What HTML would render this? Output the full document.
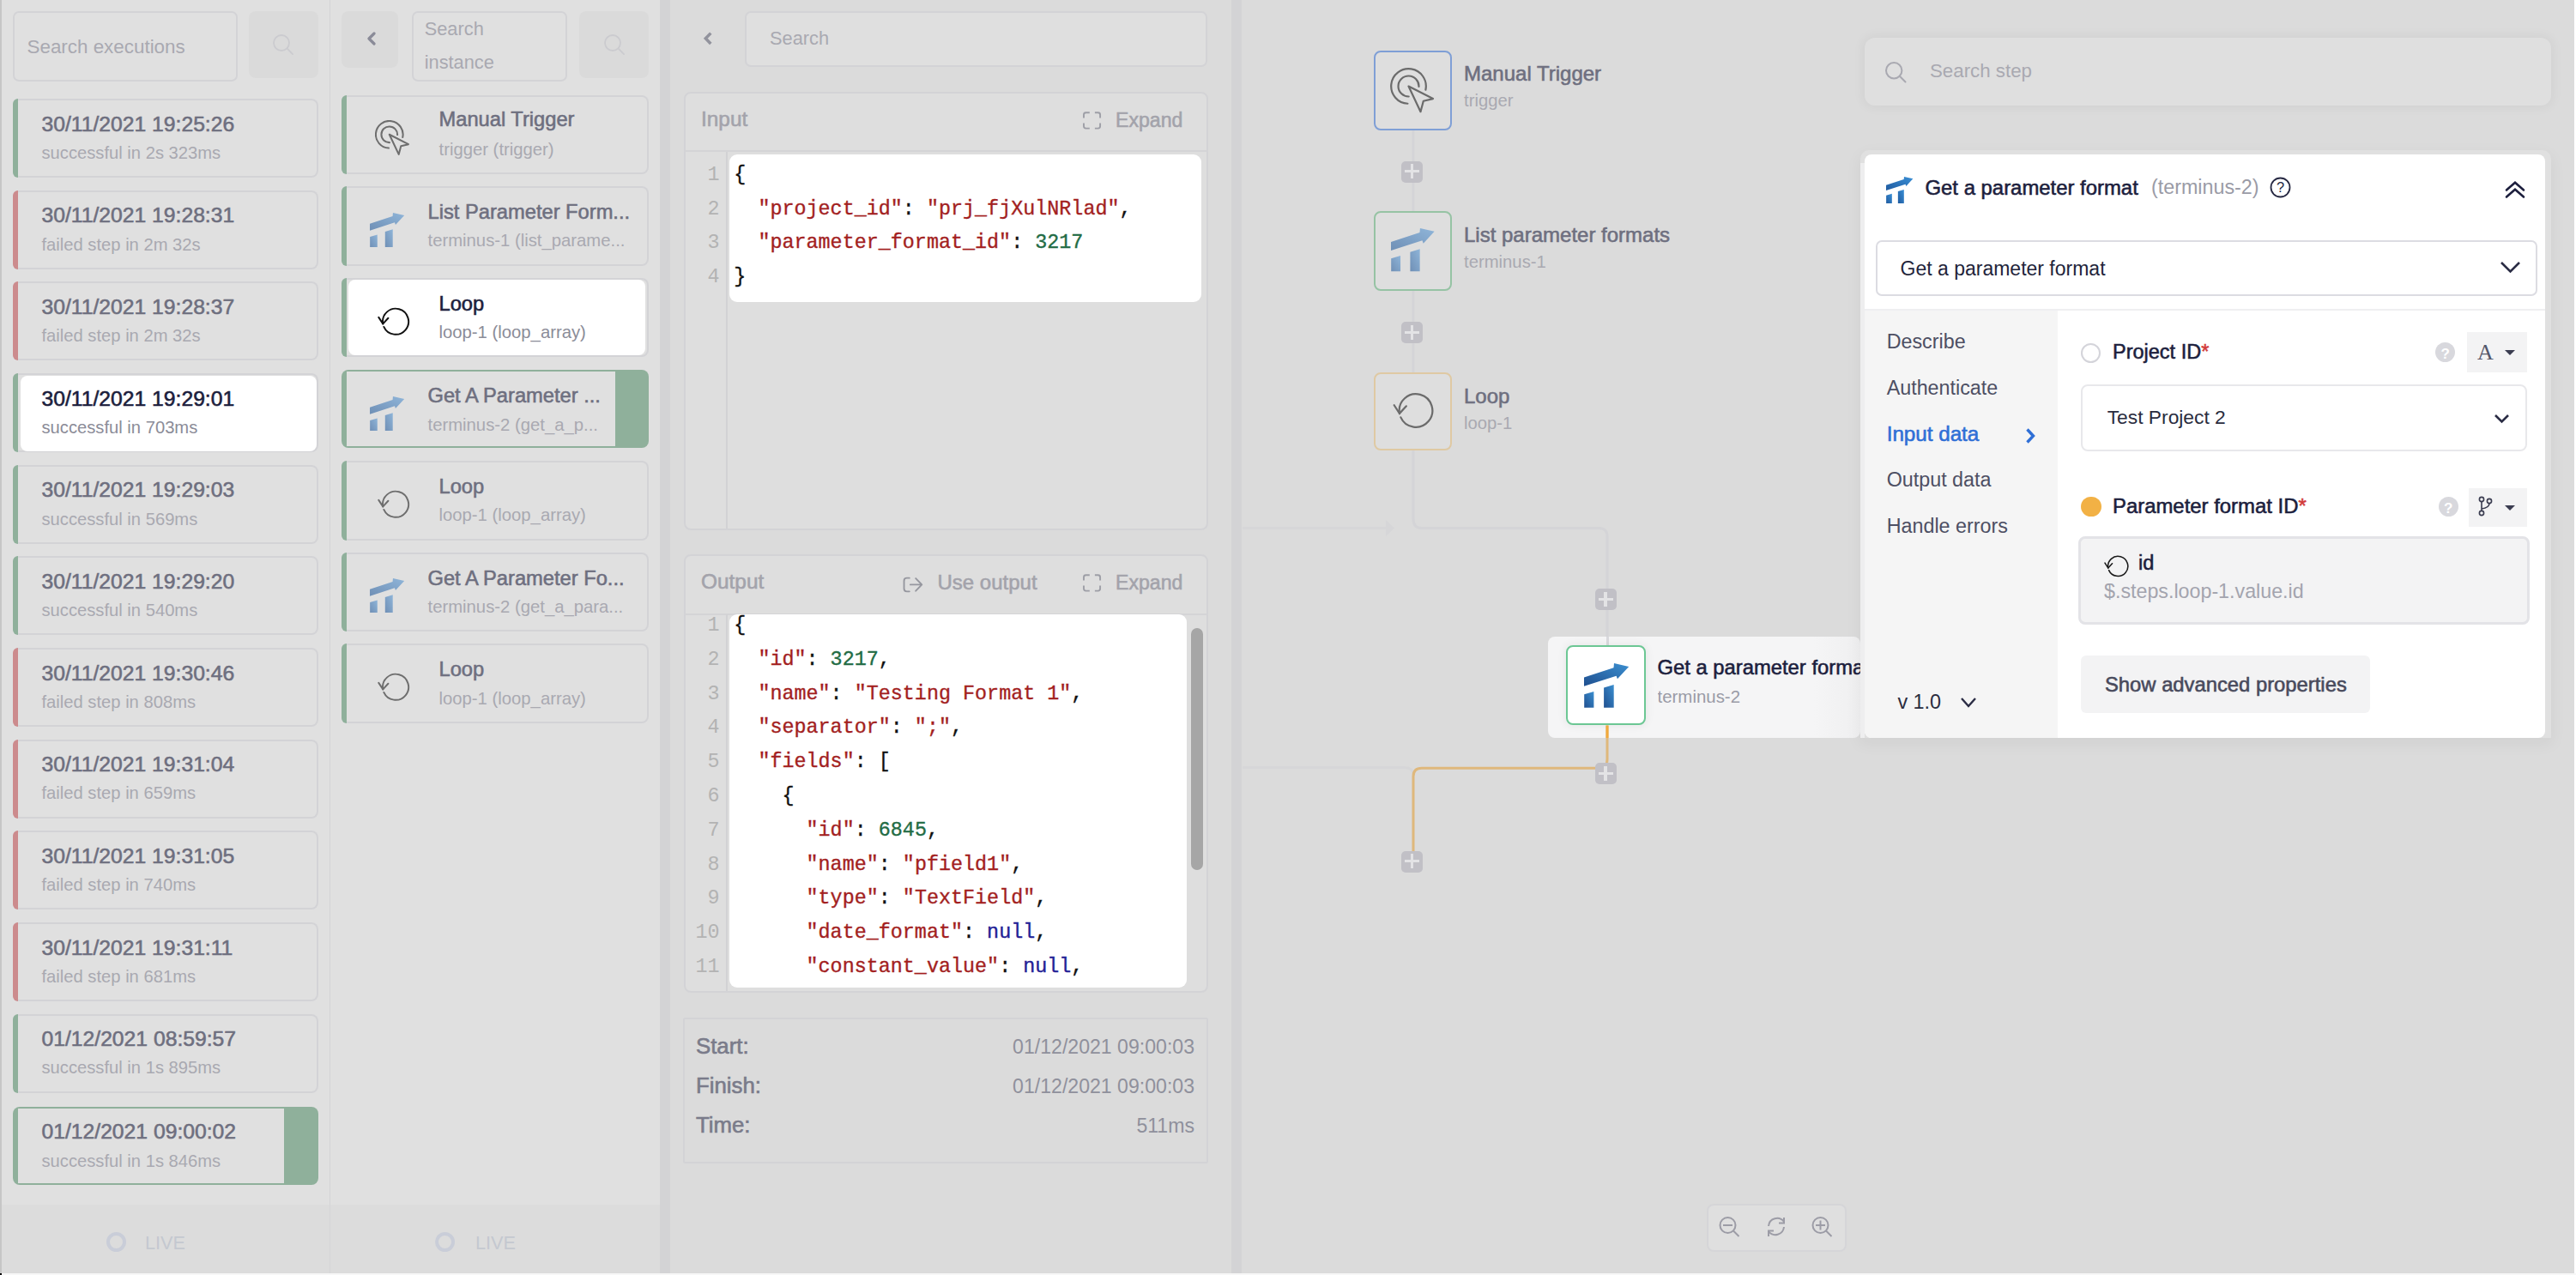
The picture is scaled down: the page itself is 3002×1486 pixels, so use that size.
<!DOCTYPE html><html><head><meta charset="utf-8"><style>html,body{margin:0;padding:0;}body{width:3002px;height:1486px;position:relative;overflow:hidden;background:#ffffff;font-family:"Liberation Sans",sans-serif;}</style></head><body>
<div style="position:absolute;left:0px;top:0px;width:3000px;height:1484px;background:#e0e0e0;"></div>
<div style="position:absolute;left:0px;top:0px;width:2px;height:1484px;background:#c6c6c6;"></div>
<div style="position:absolute;left:0px;top:1484px;width:3002px;height:2px;background:#f7f7f7;"></div>
<div style="position:absolute;left:0px;top:1484px;width:2px;height:2px;background:#000000;"></div>
<div style="position:absolute;left:384px;top:0px;width:1px;height:1484px;background:#d4d4d6;"></div>
<div style="position:absolute;left:769px;top:0px;width:12px;height:1484px;background:#d3d3d5;"></div>
<div style="position:absolute;left:1435px;top:0px;width:12px;height:1484px;background:#d3d3d5;"></div>
<div style="position:absolute;left:1447px;top:0px;width:1553px;height:1484px;background:#dbdbdb;"></div>
<div style="position:absolute;left:781px;top:0px;width:654px;height:1484px;background:#dbdbdb;"></div>
<div style="position:absolute;left:2px;top:1404px;width:382px;height:80px;background:#dcdcdc;"></div>
<div style="position:absolute;left:385px;top:1404px;width:384px;height:80px;background:#dcdcdc;"></div>
<div style="position:absolute;left:15px;top:13px;width:258px;height:78px;border:2px solid #d3d3d6;border-radius:7px;"></div>
<div style="position:absolute;left:31.50px;top:43.54px;font:400 22.4px/22.4px 'Liberation Sans', sans-serif;color:#a9a9b1;white-space:nowrap;">Search executions</div>
<div style="position:absolute;left:290px;top:13px;width:81px;height:78px;background:#dadada;border-radius:8px;"></div>
<svg style="position:absolute;left:317px;top:38.7px;" width="38" height="38" viewBox="0 0 38 38"><circle cx="11" cy="11" r="9" fill="none" stroke="#cbcbcf" stroke-width="1.8"/><line x1="17.48" y1="17.48" x2="24.049999999999997" y2="24.049999999999997" stroke="#cbcbcf" stroke-width="1.8" stroke-linecap="round"/></svg>
<div style="position:absolute;left:15px;top:115.0px;width:353.6px;height:88px;border:2px solid #d3d3d6;border-left:none;border-radius:8px;"></div>
<div style="position:absolute;left:15px;top:115.0px;width:6px;height:92px;background:#8fb09b;border-radius:8px 0 0 8px;"></div>
<div style="position:absolute;left:48.50px;top:132.69px;font:400 24.7px/24.7px 'Liberation Sans', sans-serif;color:#6e6f7f;white-space:nowrap;-webkit-text-stroke:0.59px currentColor;">30/11/2021 19:25:26</div>
<div style="position:absolute;left:48.50px;top:167.90px;font:400 20.2px/20.2px 'Liberation Sans', sans-serif;color:#a9a9b1;white-space:nowrap;">successful in 2s 323ms</div>
<div style="position:absolute;left:15px;top:221.65px;width:353.6px;height:88px;border:2px solid #d3d3d6;border-left:none;border-radius:8px;"></div>
<div style="position:absolute;left:15px;top:221.65px;width:6px;height:92px;background:#cc8b8d;border-radius:8px 0 0 8px;"></div>
<div style="position:absolute;left:48.50px;top:239.34px;font:400 24.7px/24.7px 'Liberation Sans', sans-serif;color:#6e6f7f;white-space:nowrap;-webkit-text-stroke:0.59px currentColor;">30/11/2021 19:28:31</div>
<div style="position:absolute;left:48.50px;top:274.55px;font:400 20.2px/20.2px 'Liberation Sans', sans-serif;color:#a9a9b1;white-space:nowrap;">failed step in 2m 32s</div>
<div style="position:absolute;left:15px;top:328.3px;width:353.6px;height:88px;border:2px solid #d3d3d6;border-left:none;border-radius:8px;"></div>
<div style="position:absolute;left:15px;top:328.3px;width:6px;height:92px;background:#cc8b8d;border-radius:8px 0 0 8px;"></div>
<div style="position:absolute;left:48.50px;top:345.99px;font:400 24.7px/24.7px 'Liberation Sans', sans-serif;color:#6e6f7f;white-space:nowrap;-webkit-text-stroke:0.59px currentColor;">30/11/2021 19:28:37</div>
<div style="position:absolute;left:48.50px;top:381.20px;font:400 20.2px/20.2px 'Liberation Sans', sans-serif;color:#a9a9b1;white-space:nowrap;">failed step in 2m 32s</div>
<div style="position:absolute;left:15px;top:434.95000000000005px;width:353.6px;height:88px;border:2px solid #d3d3d6;border-left:none;border-radius:8px;"></div>
<div style="position:absolute;left:15px;top:434.95000000000005px;width:6px;height:92px;background:#8fb09b;border-radius:8px 0 0 8px;"></div>
<div style="position:absolute;left:23.8px;top:437.55000000000007px;width:345.7px;height:88px;background:#ffffff;border-radius:8px;"></div>
<div style="position:absolute;left:48.50px;top:452.64px;font:400 24.7px/24.7px 'Liberation Sans', sans-serif;color:#1c1e3d;white-space:nowrap;-webkit-text-stroke:0.59px currentColor;">30/11/2021 19:29:01</div>
<div style="position:absolute;left:48.50px;top:487.85px;font:400 20.2px/20.2px 'Liberation Sans', sans-serif;color:#8b8c98;white-space:nowrap;">successful in 703ms</div>
<div style="position:absolute;left:15px;top:541.6px;width:353.6px;height:88px;border:2px solid #d3d3d6;border-left:none;border-radius:8px;"></div>
<div style="position:absolute;left:15px;top:541.6px;width:6px;height:92px;background:#8fb09b;border-radius:8px 0 0 8px;"></div>
<div style="position:absolute;left:48.50px;top:559.29px;font:400 24.7px/24.7px 'Liberation Sans', sans-serif;color:#6e6f7f;white-space:nowrap;-webkit-text-stroke:0.59px currentColor;">30/11/2021 19:29:03</div>
<div style="position:absolute;left:48.50px;top:594.50px;font:400 20.2px/20.2px 'Liberation Sans', sans-serif;color:#a9a9b1;white-space:nowrap;">successful in 569ms</div>
<div style="position:absolute;left:15px;top:648.25px;width:353.6px;height:88px;border:2px solid #d3d3d6;border-left:none;border-radius:8px;"></div>
<div style="position:absolute;left:15px;top:648.25px;width:6px;height:92px;background:#8fb09b;border-radius:8px 0 0 8px;"></div>
<div style="position:absolute;left:48.50px;top:665.94px;font:400 24.7px/24.7px 'Liberation Sans', sans-serif;color:#6e6f7f;white-space:nowrap;-webkit-text-stroke:0.59px currentColor;">30/11/2021 19:29:20</div>
<div style="position:absolute;left:48.50px;top:701.15px;font:400 20.2px/20.2px 'Liberation Sans', sans-serif;color:#a9a9b1;white-space:nowrap;">successful in 540ms</div>
<div style="position:absolute;left:15px;top:754.9000000000001px;width:353.6px;height:88px;border:2px solid #d3d3d6;border-left:none;border-radius:8px;"></div>
<div style="position:absolute;left:15px;top:754.9000000000001px;width:6px;height:92px;background:#cc8b8d;border-radius:8px 0 0 8px;"></div>
<div style="position:absolute;left:48.50px;top:772.59px;font:400 24.7px/24.7px 'Liberation Sans', sans-serif;color:#6e6f7f;white-space:nowrap;-webkit-text-stroke:0.59px currentColor;">30/11/2021 19:30:46</div>
<div style="position:absolute;left:48.50px;top:807.80px;font:400 20.2px/20.2px 'Liberation Sans', sans-serif;color:#a9a9b1;white-space:nowrap;">failed step in 808ms</div>
<div style="position:absolute;left:15px;top:861.5500000000001px;width:353.6px;height:88px;border:2px solid #d3d3d6;border-left:none;border-radius:8px;"></div>
<div style="position:absolute;left:15px;top:861.5500000000001px;width:6px;height:92px;background:#cc8b8d;border-radius:8px 0 0 8px;"></div>
<div style="position:absolute;left:48.50px;top:879.24px;font:400 24.7px/24.7px 'Liberation Sans', sans-serif;color:#6e6f7f;white-space:nowrap;-webkit-text-stroke:0.59px currentColor;">30/11/2021 19:31:04</div>
<div style="position:absolute;left:48.50px;top:914.45px;font:400 20.2px/20.2px 'Liberation Sans', sans-serif;color:#a9a9b1;white-space:nowrap;">failed step in 659ms</div>
<div style="position:absolute;left:15px;top:968.2px;width:353.6px;height:88px;border:2px solid #d3d3d6;border-left:none;border-radius:8px;"></div>
<div style="position:absolute;left:15px;top:968.2px;width:6px;height:92px;background:#cc8b8d;border-radius:8px 0 0 8px;"></div>
<div style="position:absolute;left:48.50px;top:985.89px;font:400 24.7px/24.7px 'Liberation Sans', sans-serif;color:#6e6f7f;white-space:nowrap;-webkit-text-stroke:0.59px currentColor;">30/11/2021 19:31:05</div>
<div style="position:absolute;left:48.50px;top:1021.10px;font:400 20.2px/20.2px 'Liberation Sans', sans-serif;color:#a9a9b1;white-space:nowrap;">failed step in 740ms</div>
<div style="position:absolute;left:15px;top:1074.85px;width:353.6px;height:88px;border:2px solid #d3d3d6;border-left:none;border-radius:8px;"></div>
<div style="position:absolute;left:15px;top:1074.85px;width:6px;height:92px;background:#cc8b8d;border-radius:8px 0 0 8px;"></div>
<div style="position:absolute;left:48.50px;top:1092.54px;font:400 24.7px/24.7px 'Liberation Sans', sans-serif;color:#6e6f7f;white-space:nowrap;-webkit-text-stroke:0.59px currentColor;">30/11/2021 19:31:11</div>
<div style="position:absolute;left:48.50px;top:1127.75px;font:400 20.2px/20.2px 'Liberation Sans', sans-serif;color:#a9a9b1;white-space:nowrap;">failed step in 681ms</div>
<div style="position:absolute;left:15px;top:1181.5px;width:353.6px;height:88px;border:2px solid #d3d3d6;border-left:none;border-radius:8px;"></div>
<div style="position:absolute;left:15px;top:1181.5px;width:6px;height:92px;background:#8fb09b;border-radius:8px 0 0 8px;"></div>
<div style="position:absolute;left:48.50px;top:1199.19px;font:400 24.7px/24.7px 'Liberation Sans', sans-serif;color:#6e6f7f;white-space:nowrap;-webkit-text-stroke:0.59px currentColor;">01/12/2021 08:59:57</div>
<div style="position:absolute;left:48.50px;top:1234.40px;font:400 20.2px/20.2px 'Liberation Sans', sans-serif;color:#a9a9b1;white-space:nowrap;">successful in 1s 895ms</div>
<div style="position:absolute;left:15px;top:1289.65px;width:355.6px;height:91px;background:#8fb09b;border-radius:8px;"></div>
<div style="position:absolute;left:21px;top:1291.65px;width:310px;height:87px;background:#e0e0e0;"></div>
<div style="position:absolute;left:48.50px;top:1307.34px;font:400 24.7px/24.7px 'Liberation Sans', sans-serif;color:#6e6f7f;white-space:nowrap;-webkit-text-stroke:0.59px currentColor;">01/12/2021 09:00:02</div>
<div style="position:absolute;left:48.50px;top:1342.55px;font:400 20.2px/20.2px 'Liberation Sans', sans-serif;color:#a9a9b1;white-space:nowrap;">successful in 1s 846ms</div>
<div style="position:absolute;left:123.5px;top:1436px;width:15px;height:15px;border:4px solid #c9cdd8;border-radius:50%;"></div>
<div style="position:absolute;left:169.00px;top:1437.63px;font:400 21.7px/21.7px 'Liberation Sans', sans-serif;color:#c4c8d0;white-space:nowrap;">LIVE</div>
<div style="position:absolute;left:398px;top:13px;width:66px;height:66px;background:#dadada;border-radius:8px;"></div>
<svg style="position:absolute;left:426px;top:37px;" width="14" height="16" viewBox="0 0 14 16"><path d="M10,2 L4,8 L10,14" fill="none" stroke="#8a8b98" stroke-width="3.2" stroke-linecap="round" stroke-linejoin="round"/></svg>
<div style="position:absolute;left:480px;top:13px;width:177px;height:78px;border:2px solid #d3d3d6;border-radius:7px;"></div>
<div style="position:absolute;left:494.70px;top:23.15px;font:400 21.8px/21.8px 'Liberation Sans', sans-serif;color:#a9a9b1;white-space:nowrap;">Search</div>
<div style="position:absolute;left:494.70px;top:62.35px;font:400 21.8px/21.8px 'Liberation Sans', sans-serif;color:#a9a9b1;white-space:nowrap;">instance</div>
<div style="position:absolute;left:675px;top:13px;width:81px;height:78px;background:#dadada;border-radius:8px;"></div>
<svg style="position:absolute;left:702.5px;top:38.7px;" width="38" height="38" viewBox="0 0 38 38"><circle cx="11" cy="11" r="9" fill="none" stroke="#cbcbcf" stroke-width="1.8"/><line x1="17.48" y1="17.48" x2="24.049999999999997" y2="24.049999999999997" stroke="#cbcbcf" stroke-width="1.8" stroke-linecap="round"/></svg>
<div style="position:absolute;left:398px;top:110.5px;width:355.8px;height:88.7px;border:2px solid #d3d3d6;border-left:none;border-radius:8px;"></div>
<div style="position:absolute;left:398px;top:110.5px;width:6px;height:92.7px;background:#8fb09b;border-radius:8px 0 0 8px;"></div>
<div style="position:absolute;left:511.50px;top:127.84px;font:400 23.7px/23.7px 'Liberation Sans', sans-serif;color:#6e6f7f;white-space:nowrap;-webkit-text-stroke:0.57px currentColor;">Manual Trigger</div>
<div style="position:absolute;left:511.50px;top:163.62px;font:400 20.3px/20.3px 'Liberation Sans', sans-serif;color:#a9a9b1;white-space:nowrap;">trigger (trigger)</div>
<svg style="position:absolute;left:437px;top:140.1px;" width="44" height="44" viewBox="0 0 44 44"><g transform="scale(0.78)"><path d="M41.36,25.72 A20.3,20.3 0 1 0 20.44,41.77 M33.49,21.92 A12,12 0 1 0 21.71,33.50" fill="none" stroke="#6e6e6e" stroke-width="2.6" stroke-linecap="round"/><path d="M21.50,21.50 L50.00,36.10 L38.80,38.70 L35.50,51.20 Z" fill="none" stroke="#6e6e6e" stroke-width="2.6" stroke-linejoin="round"/></g></svg>
<div style="position:absolute;left:398px;top:217.15px;width:355.8px;height:88.7px;border:2px solid #d3d3d6;border-left:none;border-radius:8px;"></div>
<div style="position:absolute;left:398px;top:217.15px;width:6px;height:92.7px;background:#8fb09b;border-radius:8px 0 0 8px;"></div>
<div style="position:absolute;left:498.50px;top:235.94px;font:400 23.7px/23.7px 'Liberation Sans', sans-serif;color:#6e6f7f;white-space:nowrap;-webkit-text-stroke:0.57px currentColor;">List Parameter Form...</div>
<div style="position:absolute;left:498.50px;top:270.27px;font:400 20.3px/20.3px 'Liberation Sans', sans-serif;color:#a9a9b1;white-space:nowrap;">terminus-1 (list_parame...</div>
<svg style="position:absolute;left:430.7px;top:247.65px;" width="42" height="42" viewBox="0 0 42 42"><defs><linearGradient id="tg1" x1="0" y1="1" x2="1" y2="0"><stop offset="0" stop-color="#6f8fb5"/><stop offset="1" stop-color="#8fb5d9"/></linearGradient></defs><g transform="scale(0.77)" fill="url(#tg1)" opacity="1"><path d="M0,26.8 L0,16.4 L34.5,5.2 L35,0 L52.2,3.9 L38.9,18.2 L37.6,14.7 Z"/><path d="M0.2,36.3 L11.4,33 L11.4,51.8 L0.2,51.8 Z"/><path d="M23.1,28.5 L34.7,25 L34.7,51.8 L23.1,51.8 Z"/></g></svg>
<div style="position:absolute;left:398px;top:323.8px;width:355.8px;height:88.7px;border:2px solid #d3d3d6;border-left:none;border-radius:8px;"></div>
<div style="position:absolute;left:398px;top:323.8px;width:6px;height:92.7px;background:#8fb09b;border-radius:8px 0 0 8px;"></div>
<div style="position:absolute;left:406px;top:326.0px;width:346px;height:88.3px;background:#ffffff;border-radius:8px;"></div>
<div style="position:absolute;left:511.50px;top:342.59px;font:400 23.7px/23.7px 'Liberation Sans', sans-serif;color:#1c1e3d;white-space:nowrap;-webkit-text-stroke:0.57px currentColor;">Loop</div>
<div style="position:absolute;left:511.50px;top:376.92px;font:400 20.3px/20.3px 'Liberation Sans', sans-serif;color:#8b8c98;white-space:nowrap;">loop-1 (loop_array)</div>
<svg style="position:absolute;left:439.6px;top:357.8px;" width="41" height="37" viewBox="0 0 41 37"><g transform="scale(0.78)"><path d="M7.99,24.85 A19.3,19.3 0 1 1 9.37,29.35" fill="none" stroke="#111111" stroke-width="2.5" stroke-linecap="round"/><path d="M1.69,15.25 L7.99,24.85 L15.89,16.35" fill="none" stroke="#111111" stroke-width="2.5" stroke-linecap="round" stroke-linejoin="miter"/></g></svg>
<div style="position:absolute;left:398px;top:431.45000000000005px;width:357.8px;height:91px;background:#8fb09b;border-radius:8px;"></div>
<div style="position:absolute;left:404px;top:433.45000000000005px;width:312.5px;height:87px;background:#e0e0e0;"></div>
<div style="position:absolute;left:498.50px;top:450.24px;font:400 23.7px/23.7px 'Liberation Sans', sans-serif;color:#6e6f7f;white-space:nowrap;-webkit-text-stroke:0.57px currentColor;">Get A Parameter ...</div>
<div style="position:absolute;left:498.50px;top:484.57px;font:400 20.3px/20.3px 'Liberation Sans', sans-serif;color:#a9a9b1;white-space:nowrap;">terminus-2 (get_a_p...</div>
<svg style="position:absolute;left:430.7px;top:461.95000000000005px;" width="42" height="42" viewBox="0 0 42 42"><defs><linearGradient id="tg2" x1="0" y1="1" x2="1" y2="0"><stop offset="0" stop-color="#6f8fb5"/><stop offset="1" stop-color="#8fb5d9"/></linearGradient></defs><g transform="scale(0.77)" fill="url(#tg2)" opacity="1"><path d="M0,26.8 L0,16.4 L34.5,5.2 L35,0 L52.2,3.9 L38.9,18.2 L37.6,14.7 Z"/><path d="M0.2,36.3 L11.4,33 L11.4,51.8 L0.2,51.8 Z"/><path d="M23.1,28.5 L34.7,25 L34.7,51.8 L23.1,51.8 Z"/></g></svg>
<div style="position:absolute;left:398px;top:537.1px;width:355.8px;height:88.7px;border:2px solid #d3d3d6;border-left:none;border-radius:8px;"></div>
<div style="position:absolute;left:398px;top:537.1px;width:6px;height:92.7px;background:#8fb09b;border-radius:8px 0 0 8px;"></div>
<div style="position:absolute;left:511.50px;top:555.89px;font:400 23.7px/23.7px 'Liberation Sans', sans-serif;color:#6e6f7f;white-space:nowrap;-webkit-text-stroke:0.57px currentColor;">Loop</div>
<div style="position:absolute;left:511.50px;top:590.22px;font:400 20.3px/20.3px 'Liberation Sans', sans-serif;color:#a9a9b1;white-space:nowrap;">loop-1 (loop_array)</div>
<svg style="position:absolute;left:439.6px;top:571.1px;" width="41" height="37" viewBox="0 0 41 37"><g transform="scale(0.78)"><path d="M7.99,24.85 A19.3,19.3 0 1 1 9.37,29.35" fill="none" stroke="#6e6e6e" stroke-width="2.5" stroke-linecap="round"/><path d="M1.69,15.25 L7.99,24.85 L15.89,16.35" fill="none" stroke="#6e6e6e" stroke-width="2.5" stroke-linecap="round" stroke-linejoin="miter"/></g></svg>
<div style="position:absolute;left:398px;top:643.75px;width:355.8px;height:88.7px;border:2px solid #d3d3d6;border-left:none;border-radius:8px;"></div>
<div style="position:absolute;left:398px;top:643.75px;width:6px;height:92.7px;background:#8fb09b;border-radius:8px 0 0 8px;"></div>
<div style="position:absolute;left:498.50px;top:662.54px;font:400 23.7px/23.7px 'Liberation Sans', sans-serif;color:#6e6f7f;white-space:nowrap;-webkit-text-stroke:0.57px currentColor;">Get A Parameter Fo...</div>
<div style="position:absolute;left:498.50px;top:696.87px;font:400 20.3px/20.3px 'Liberation Sans', sans-serif;color:#a9a9b1;white-space:nowrap;">terminus-2 (get_a_para...</div>
<svg style="position:absolute;left:430.7px;top:674.25px;" width="42" height="42" viewBox="0 0 42 42"><defs><linearGradient id="tg3" x1="0" y1="1" x2="1" y2="0"><stop offset="0" stop-color="#6f8fb5"/><stop offset="1" stop-color="#8fb5d9"/></linearGradient></defs><g transform="scale(0.77)" fill="url(#tg3)" opacity="1"><path d="M0,26.8 L0,16.4 L34.5,5.2 L35,0 L52.2,3.9 L38.9,18.2 L37.6,14.7 Z"/><path d="M0.2,36.3 L11.4,33 L11.4,51.8 L0.2,51.8 Z"/><path d="M23.1,28.5 L34.7,25 L34.7,51.8 L23.1,51.8 Z"/></g></svg>
<div style="position:absolute;left:398px;top:750.4000000000001px;width:355.8px;height:88.7px;border:2px solid #d3d3d6;border-left:none;border-radius:8px;"></div>
<div style="position:absolute;left:398px;top:750.4000000000001px;width:6px;height:92.7px;background:#8fb09b;border-radius:8px 0 0 8px;"></div>
<div style="position:absolute;left:511.50px;top:769.19px;font:400 23.7px/23.7px 'Liberation Sans', sans-serif;color:#6e6f7f;white-space:nowrap;-webkit-text-stroke:0.57px currentColor;">Loop</div>
<div style="position:absolute;left:511.50px;top:803.52px;font:400 20.3px/20.3px 'Liberation Sans', sans-serif;color:#a9a9b1;white-space:nowrap;">loop-1 (loop_array)</div>
<svg style="position:absolute;left:439.6px;top:784.4000000000001px;" width="41" height="37" viewBox="0 0 41 37"><g transform="scale(0.78)"><path d="M7.99,24.85 A19.3,19.3 0 1 1 9.37,29.35" fill="none" stroke="#6e6e6e" stroke-width="2.5" stroke-linecap="round"/><path d="M1.69,15.25 L7.99,24.85 L15.89,16.35" fill="none" stroke="#6e6e6e" stroke-width="2.5" stroke-linecap="round" stroke-linejoin="miter"/></g></svg>
<div style="position:absolute;left:507px;top:1436px;width:15px;height:15px;border:4px solid #c9cdd8;border-radius:50%;"></div>
<div style="position:absolute;left:554.00px;top:1437.63px;font:400 21.7px/21.7px 'Liberation Sans', sans-serif;color:#c4c8d0;white-space:nowrap;">LIVE</div>
<svg style="position:absolute;left:817px;top:36px;" width="16" height="18" viewBox="0 0 16 18"><path d="M11.3,2.6 L5.3,8.8 L11.3,15" fill="none" stroke="#92939d" stroke-width="3.5" stroke-linecap="butt" stroke-linejoin="miter"/></svg>
<div style="position:absolute;left:868px;top:13px;width:535px;height:61px;border:2px solid #d3d3d6;border-radius:7px;background:#dfdfdf;"></div>
<div style="position:absolute;left:897.00px;top:34.25px;font:400 21.8px/21.8px 'Liberation Sans', sans-serif;color:#a9a9b1;white-space:nowrap;">Search</div>
<div style="position:absolute;left:796.7px;top:106.6px;width:607.6px;height:507.19999999999993px;border:2px solid #d3d3d6;border-radius:8px;background:#dedede;"></div>
<div style="position:absolute;left:798.7px;top:174.6px;width:607.6px;height:2px;background:#d4d4d6;"></div>
<div style="position:absolute;left:845.5px;top:176.6px;width:2px;height:439.19999999999993px;background:#d2d2d4;"></div>
<div style="position:absolute;left:817.00px;top:127.45px;font:400 24.4px/24.4px 'Liberation Sans', sans-serif;color:#a3a3ab;white-space:nowrap;-webkit-text-stroke:0.59px currentColor;">Input</div>
<svg style="position:absolute;left:1260px;top:129.29999999999998px;" width="26" height="24" viewBox="0 0 26 24"><path d="M3,8.4 L3,4.7 Q3,2.2 5.5,2.2 L9.8,2.2 M15.9,2.2 L19.6,2.2 Q22.1,2.2 22.1,4.7 L22.1,8.4 M22.1,14.5 L22.1,18.1 Q22.1,20.6 19.6,20.6 L15.9,20.6 M9.8,20.6 L5.5,20.6 Q3,20.6 3,18.1 L3,14.5" fill="none" stroke="#9d9ea6" stroke-width="1.9"/></svg>
<div style="position:absolute;left:1300.00px;top:128.55px;font:400 23.1px/23.1px 'Liberation Sans', sans-serif;color:#a3a3ab;white-space:nowrap;-webkit-text-stroke:0.55px currentColor;">Expand</div>
<div style="position:absolute;left:796.7px;top:645.6px;width:607.6px;height:507.4px;border:2px solid #d3d3d6;border-radius:8px;background:#dedede;"></div>
<div style="position:absolute;left:798.7px;top:714.8000000000001px;width:607.6px;height:2px;background:#d4d4d6;"></div>
<div style="position:absolute;left:845.5px;top:715.6px;width:2px;height:439.4px;background:#d2d2d4;"></div>
<div style="position:absolute;left:817.00px;top:666.45px;font:400 24.4px/24.4px 'Liberation Sans', sans-serif;color:#a3a3ab;white-space:nowrap;-webkit-text-stroke:0.59px currentColor;">Output</div>
<svg style="position:absolute;left:1260px;top:668.3000000000001px;" width="26" height="24" viewBox="0 0 26 24"><path d="M3,8.4 L3,4.7 Q3,2.2 5.5,2.2 L9.8,2.2 M15.9,2.2 L19.6,2.2 Q22.1,2.2 22.1,4.7 L22.1,8.4 M22.1,14.5 L22.1,18.1 Q22.1,20.6 19.6,20.6 L15.9,20.6 M9.8,20.6 L5.5,20.6 Q3,20.6 3,18.1 L3,14.5" fill="none" stroke="#9d9ea6" stroke-width="1.9"/></svg>
<div style="position:absolute;left:1300.00px;top:667.55px;font:400 23.1px/23.1px 'Liberation Sans', sans-serif;color:#a3a3ab;white-space:nowrap;-webkit-text-stroke:0.55px currentColor;">Expand</div>
<svg style="position:absolute;left:1051.5px;top:670.6px;" width="25" height="22" viewBox="0 0 25 22"><path d="M7.8,2.65 L4.8,2.65 Q1.55,2.65 1.55,5.9 L1.55,15.1 Q1.55,18.35 4.8,18.35 L7.8,18.35 M8.9,10.4 L22.1,10.4 M15.2,3.1 L22.3,10.4 L15.2,17.7" fill="none" stroke="#96979f" stroke-width="1.9" stroke-linecap="round" stroke-linejoin="round"/></svg>
<div style="position:absolute;left:1092.50px;top:666.78px;font:400 24.0px/24.0px 'Liberation Sans', sans-serif;color:#a3a3ab;white-space:nowrap;-webkit-text-stroke:0.58px currentColor;">Use output</div>
<div style="position:absolute;left:849.6px;top:180.1px;width:550px;height:171.7px;background:#ffffff;border-radius:9px;"></div>
<div style="position:absolute;left:849.6px;top:716.2px;width:533.4px;height:434.8px;background:#ffffff;border-radius:9px;"></div>
<div style="position:absolute;left:1388px;top:731.8px;width:14px;height:282px;background:#a6a6a6;border-radius:7px;"></div>
<div style="position:absolute;right:2163.50px;top:193.26px;font:400 23.4px/23.4px 'Liberation Mono', monospace;color:#b3b3b3;white-space:nowrap;">1</div>
<div style="position:absolute;left:855.30px;top:193.26px;font:400 23.4px/23.4px 'Liberation Mono', monospace;color:#111111;white-space:nowrap;white-space:pre;-webkit-text-stroke:0.35px currentColor;"><span style="color:#111111">{</span></div>
<div style="position:absolute;right:2163.50px;top:232.76px;font:400 23.4px/23.4px 'Liberation Mono', monospace;color:#b3b3b3;white-space:nowrap;">2</div>
<div style="position:absolute;left:855.30px;top:232.76px;font:400 23.4px/23.4px 'Liberation Mono', monospace;color:#111111;white-space:nowrap;white-space:pre;-webkit-text-stroke:0.35px currentColor;">  <span style="color:#a31f1f">"project_id"</span><span style="color:#111111">: </span><span style="color:#a31f1f">"prj_fjXulNRlad"</span><span style="color:#111111">,</span></div>
<div style="position:absolute;right:2163.50px;top:272.26px;font:400 23.4px/23.4px 'Liberation Mono', monospace;color:#b3b3b3;white-space:nowrap;">3</div>
<div style="position:absolute;left:855.30px;top:272.26px;font:400 23.4px/23.4px 'Liberation Mono', monospace;color:#111111;white-space:nowrap;white-space:pre;-webkit-text-stroke:0.35px currentColor;">  <span style="color:#a31f1f">"parameter_format_id"</span><span style="color:#111111">: </span><span style="color:#236c45">3217</span></div>
<div style="position:absolute;right:2163.50px;top:311.76px;font:400 23.4px/23.4px 'Liberation Mono', monospace;color:#b3b3b3;white-space:nowrap;">4</div>
<div style="position:absolute;left:855.30px;top:311.76px;font:400 23.4px/23.4px 'Liberation Mono', monospace;color:#111111;white-space:nowrap;white-space:pre;-webkit-text-stroke:0.35px currentColor;"><span style="color:#111111">}</span></div>
<div style="position:absolute;right:2163.50px;top:718.06px;font:400 23.4px/23.4px 'Liberation Mono', monospace;color:#b3b3b3;white-space:nowrap;">1</div>
<div style="position:absolute;left:855.30px;top:718.06px;font:400 23.4px/23.4px 'Liberation Mono', monospace;color:#111111;white-space:nowrap;white-space:pre;-webkit-text-stroke:0.35px currentColor;"><span style="color:#111111">{</span></div>
<div style="position:absolute;right:2163.50px;top:757.86px;font:400 23.4px/23.4px 'Liberation Mono', monospace;color:#b3b3b3;white-space:nowrap;">2</div>
<div style="position:absolute;left:855.30px;top:757.86px;font:400 23.4px/23.4px 'Liberation Mono', monospace;color:#111111;white-space:nowrap;white-space:pre;-webkit-text-stroke:0.35px currentColor;">  <span style="color:#a31f1f">"id"</span><span style="color:#111111">: </span><span style="color:#236c45">3217</span><span style="color:#111111">,</span></div>
<div style="position:absolute;right:2163.50px;top:797.66px;font:400 23.4px/23.4px 'Liberation Mono', monospace;color:#b3b3b3;white-space:nowrap;">3</div>
<div style="position:absolute;left:855.30px;top:797.66px;font:400 23.4px/23.4px 'Liberation Mono', monospace;color:#111111;white-space:nowrap;white-space:pre;-webkit-text-stroke:0.35px currentColor;">  <span style="color:#a31f1f">"name"</span><span style="color:#111111">: </span><span style="color:#a31f1f">"Testing Format 1"</span><span style="color:#111111">,</span></div>
<div style="position:absolute;right:2163.50px;top:837.46px;font:400 23.4px/23.4px 'Liberation Mono', monospace;color:#b3b3b3;white-space:nowrap;">4</div>
<div style="position:absolute;left:855.30px;top:837.46px;font:400 23.4px/23.4px 'Liberation Mono', monospace;color:#111111;white-space:nowrap;white-space:pre;-webkit-text-stroke:0.35px currentColor;">  <span style="color:#a31f1f">"separator"</span><span style="color:#111111">: </span><span style="color:#a31f1f">";"</span><span style="color:#111111">,</span></div>
<div style="position:absolute;right:2163.50px;top:877.26px;font:400 23.4px/23.4px 'Liberation Mono', monospace;color:#b3b3b3;white-space:nowrap;">5</div>
<div style="position:absolute;left:855.30px;top:877.26px;font:400 23.4px/23.4px 'Liberation Mono', monospace;color:#111111;white-space:nowrap;white-space:pre;-webkit-text-stroke:0.35px currentColor;">  <span style="color:#a31f1f">"fields"</span><span style="color:#111111">: [</span></div>
<div style="position:absolute;right:2163.50px;top:917.06px;font:400 23.4px/23.4px 'Liberation Mono', monospace;color:#b3b3b3;white-space:nowrap;">6</div>
<div style="position:absolute;left:855.30px;top:917.06px;font:400 23.4px/23.4px 'Liberation Mono', monospace;color:#111111;white-space:nowrap;white-space:pre;-webkit-text-stroke:0.35px currentColor;">    <span style="color:#111111">{</span></div>
<div style="position:absolute;right:2163.50px;top:956.86px;font:400 23.4px/23.4px 'Liberation Mono', monospace;color:#b3b3b3;white-space:nowrap;">7</div>
<div style="position:absolute;left:855.30px;top:956.86px;font:400 23.4px/23.4px 'Liberation Mono', monospace;color:#111111;white-space:nowrap;white-space:pre;-webkit-text-stroke:0.35px currentColor;">      <span style="color:#a31f1f">"id"</span><span style="color:#111111">: </span><span style="color:#236c45">6845</span><span style="color:#111111">,</span></div>
<div style="position:absolute;right:2163.50px;top:996.66px;font:400 23.4px/23.4px 'Liberation Mono', monospace;color:#b3b3b3;white-space:nowrap;">8</div>
<div style="position:absolute;left:855.30px;top:996.66px;font:400 23.4px/23.4px 'Liberation Mono', monospace;color:#111111;white-space:nowrap;white-space:pre;-webkit-text-stroke:0.35px currentColor;">      <span style="color:#a31f1f">"name"</span><span style="color:#111111">: </span><span style="color:#a31f1f">"pfield1"</span><span style="color:#111111">,</span></div>
<div style="position:absolute;right:2163.50px;top:1036.46px;font:400 23.4px/23.4px 'Liberation Mono', monospace;color:#b3b3b3;white-space:nowrap;">9</div>
<div style="position:absolute;left:855.30px;top:1036.46px;font:400 23.4px/23.4px 'Liberation Mono', monospace;color:#111111;white-space:nowrap;white-space:pre;-webkit-text-stroke:0.35px currentColor;">      <span style="color:#a31f1f">"type"</span><span style="color:#111111">: </span><span style="color:#a31f1f">"TextField"</span><span style="color:#111111">,</span></div>
<div style="position:absolute;right:2163.50px;top:1076.26px;font:400 23.4px/23.4px 'Liberation Mono', monospace;color:#b3b3b3;white-space:nowrap;">10</div>
<div style="position:absolute;left:855.30px;top:1076.26px;font:400 23.4px/23.4px 'Liberation Mono', monospace;color:#111111;white-space:nowrap;white-space:pre;-webkit-text-stroke:0.35px currentColor;">      <span style="color:#a31f1f">"date_format"</span><span style="color:#111111">: </span><span style="color:#232196">null</span><span style="color:#111111">,</span></div>
<div style="position:absolute;right:2163.50px;top:1116.06px;font:400 23.4px/23.4px 'Liberation Mono', monospace;color:#b3b3b3;white-space:nowrap;">11</div>
<div style="position:absolute;left:855.30px;top:1116.06px;font:400 23.4px/23.4px 'Liberation Mono', monospace;color:#111111;white-space:nowrap;white-space:pre;-webkit-text-stroke:0.35px currentColor;">      <span style="color:#a31f1f">"constant_value"</span><span style="color:#111111">: </span><span style="color:#232196">null</span><span style="color:#111111">,</span></div>
<div style="position:absolute;left:796.3px;top:1186px;width:607.5px;height:166px;border:2px solid #d3d3d6;border-radius:2px;"></div>
<div style="position:absolute;left:811.00px;top:1207.16px;font:400 25.8px/25.8px 'Liberation Sans', sans-serif;color:#7a7b8a;white-space:nowrap;-webkit-text-stroke:0.62px currentColor;">Start:</div>
<div style="position:absolute;right:1610.00px;top:1209.45px;font:400 23.1px/23.1px 'Liberation Sans', sans-serif;color:#8f909c;white-space:nowrap;">01/12/2021 09:00:03</div>
<div style="position:absolute;left:811.00px;top:1252.86px;font:400 25.8px/25.8px 'Liberation Sans', sans-serif;color:#7a7b8a;white-space:nowrap;-webkit-text-stroke:0.62px currentColor;">Finish:</div>
<div style="position:absolute;right:1610.00px;top:1255.15px;font:400 23.1px/23.1px 'Liberation Sans', sans-serif;color:#8f909c;white-space:nowrap;">01/12/2021 09:00:03</div>
<div style="position:absolute;left:811.00px;top:1298.56px;font:400 25.8px/25.8px 'Liberation Sans', sans-serif;color:#7a7b8a;white-space:nowrap;-webkit-text-stroke:0.62px currentColor;">Time:</div>
<div style="position:absolute;right:1610.00px;top:1300.85px;font:400 23.1px/23.1px 'Liberation Sans', sans-serif;color:#8f909c;white-space:nowrap;">511ms</div>
<svg style="position:absolute;left:0;top:0" width="3002" height="1486">
<path d="M1647,151 L1647,246" stroke="#d4d4d7" stroke-width="3" fill="none"/>
<path d="M1647,339 L1647,434" stroke="#d4d4d7" stroke-width="3" fill="none"/>
<path d="M1647,524 L1647,605 Q1647,615.5 1657,615.5 L1863,615.5 Q1873,615.5 1873,625 L1873,752" stroke="#d4d4d7" stroke-width="3" fill="none"/>
<path d="M1448,615.5 L1616,615.5" stroke="#d6d6d8" stroke-width="3" fill="none"/>
<path d="M1615,606 L1625,615.5 L1615,625 Z" fill="#d6d6d8"/>
<path d="M1448,894.5 L1636,894.5 Q1646,894.5 1647,902" stroke="#d6d6d8" stroke-width="3" fill="none"/>
</svg>
<div style="position:absolute;left:1600.5px;top:58.5px;width:87px;height:89px;border:2px solid #7f9fd6;border-radius:8px;background:#dedede;"></div>
<svg style="position:absolute;left:1620px;top:79.2px;" width="56" height="56" viewBox="0 0 56 56"><g transform="scale(1.0)"><path d="M41.36,25.72 A20.3,20.3 0 1 0 20.44,41.77 M33.49,21.92 A12,12 0 1 0 21.71,33.50" fill="none" stroke="#6b6b6b" stroke-width="2.2" stroke-linecap="round"/><path d="M21.50,21.50 L50.00,36.10 L38.80,38.70 L35.50,51.20 Z" fill="none" stroke="#6b6b6b" stroke-width="2.2" stroke-linejoin="round"/></g></svg>
<div style="position:absolute;left:1706.00px;top:74.18px;font:400 24.0px/24.0px 'Liberation Sans', sans-serif;color:#6e6f7f;white-space:nowrap;-webkit-text-stroke:0.58px currentColor;">Manual Trigger</div>
<div style="position:absolute;left:1706.00px;top:107.12px;font:400 20.3px/20.3px 'Liberation Sans', sans-serif;color:#a9a9b1;white-space:nowrap;">trigger</div>
<div style="position:absolute;left:1600.5px;top:246px;width:87px;height:89px;border:2px solid #96c3a4;border-radius:8px;background:#dedede;"></div>
<svg style="position:absolute;left:1620.5px;top:265.8px;" width="53" height="53" viewBox="0 0 53 53"><defs><linearGradient id="tg4" x1="0" y1="1" x2="1" y2="0"><stop offset="0" stop-color="#6f8fb5"/><stop offset="1" stop-color="#8fb5d9"/></linearGradient></defs><g transform="scale(0.97)" fill="url(#tg4)" opacity="1"><path d="M0,26.8 L0,16.4 L34.5,5.2 L35,0 L52.2,3.9 L38.9,18.2 L37.6,14.7 Z"/><path d="M0.2,36.3 L11.4,33 L11.4,51.8 L0.2,51.8 Z"/><path d="M23.1,28.5 L34.7,25 L34.7,51.8 L23.1,51.8 Z"/></g></svg>
<div style="position:absolute;left:1706.00px;top:261.68px;font:400 24.0px/24.0px 'Liberation Sans', sans-serif;color:#6e6f7f;white-space:nowrap;-webkit-text-stroke:0.58px currentColor;">List parameter formats</div>
<div style="position:absolute;left:1706.00px;top:294.82px;font:400 20.3px/20.3px 'Liberation Sans', sans-serif;color:#a9a9b1;white-space:nowrap;">terminus-1</div>
<div style="position:absolute;left:1600.5px;top:433.5px;width:87px;height:87px;border:2px solid #dfc9a3;border-radius:8px;background:#dedede;"></div>
<svg style="position:absolute;left:1623px;top:457.4px;" width="52" height="48" viewBox="0 0 52 48"><g transform="scale(1.0)"><path d="M7.99,24.85 A19.3,19.3 0 1 1 9.37,29.35" fill="none" stroke="#6b6b6b" stroke-width="2.2" stroke-linecap="round"/><path d="M1.69,15.25 L7.99,24.85 L15.89,16.35" fill="none" stroke="#6b6b6b" stroke-width="2.2" stroke-linecap="round" stroke-linejoin="miter"/></g></svg>
<div style="position:absolute;left:1706.00px;top:449.68px;font:400 24.0px/24.0px 'Liberation Sans', sans-serif;color:#6e6f7f;white-space:nowrap;-webkit-text-stroke:0.58px currentColor;">Loop</div>
<div style="position:absolute;left:1706.00px;top:482.82px;font:400 20.3px/20.3px 'Liberation Sans', sans-serif;color:#a9a9b1;white-space:nowrap;">loop-1</div>
<div style="position:absolute;left:1803.8px;top:742px;width:364px;height:118px;background:linear-gradient(90deg,#f5f5f6 0%,#f5f5f6 85%,#efeff0 100%);border-radius:8px;"></div>
<div style="position:absolute;left:1871.5px;top:742px;width:3px;height:10.5px;background:#d9d9dd;"></div>
<div style="position:absolute;left:1825.2px;top:752.4px;width:89px;height:89px;border:2px solid #6cc794;border-radius:8px;background:#ffffff;box-shadow:0 0 10px 2px rgba(0,0,0,0.05);"></div>
<svg style="position:absolute;left:1845.6px;top:773px;" width="55" height="55" viewBox="0 0 55 55"><defs><linearGradient id="tg5" x1="0" y1="1" x2="1" y2="0"><stop offset="0" stop-color="#1f4f8f"/><stop offset="1" stop-color="#3b8fd0"/></linearGradient></defs><g transform="scale(1.0)" fill="url(#tg5)" opacity="1"><path d="M0,26.8 L0,16.4 L34.5,5.2 L35,0 L52.2,3.9 L38.9,18.2 L37.6,14.7 Z"/><path d="M0.2,36.3 L11.4,33 L11.4,51.8 L0.2,51.8 Z"/><path d="M23.1,28.5 L34.7,25 L34.7,51.8 L23.1,51.8 Z"/></g></svg>
<div style="position:absolute;left:1931.5px;top:0;width:241px;height:1486px;overflow:hidden;">
<div style="position:absolute;left:0.00px;top:766.15px;font:400 23.8px/23.8px 'Liberation Sans', sans-serif;color:#1c1e3d;white-space:nowrap;-webkit-text-stroke:0.57px currentColor;">Get a parameter format</div>
<div style="position:absolute;left:0.00px;top:802.39px;font:400 20.45px/20.45px 'Liberation Sans', sans-serif;color:#9a9ba6;white-space:nowrap;">terminus-2</div>
</div>
<svg style="position:absolute;left:0;top:0" width="3002" height="1486"><path d="M1873,845.5 L1873,885 Q1873,895.3 1863,895.3 L1657,895.3 Q1647,895.3 1647,905 L1647,993" stroke="#dfb87c" stroke-width="3" fill="none"/><path d="M1873,845.5 L1873,860" stroke="#f2aa3c" stroke-width="3" fill="none"/></svg>
<div style="position:absolute;left:1633px;top:187.5px;width:25px;height:25px;background:#c1c0c6;border-radius:5px;"></div>
<div style="position:absolute;left:1637px;top:198.3px;width:17px;height:3.2px;background:#e3e3e5;"></div>
<div style="position:absolute;left:1643.9px;top:191.3px;width:3.2px;height:17px;background:#e3e3e5;"></div>
<div style="position:absolute;left:1633px;top:375px;width:25px;height:25px;background:#c1c0c6;border-radius:5px;"></div>
<div style="position:absolute;left:1637px;top:385.8px;width:17px;height:3.2px;background:#e3e3e5;"></div>
<div style="position:absolute;left:1643.9px;top:378.8px;width:3.2px;height:17px;background:#e3e3e5;"></div>
<div style="position:absolute;left:1858.5px;top:686px;width:25px;height:25px;background:#c1c0c6;border-radius:5px;"></div>
<div style="position:absolute;left:1862.5px;top:696.8px;width:17px;height:3.2px;background:#e3e3e5;"></div>
<div style="position:absolute;left:1869.4px;top:689.8px;width:3.2px;height:17px;background:#e3e3e5;"></div>
<div style="position:absolute;left:1858.5px;top:889px;width:25px;height:25px;background:#c1c0c6;border-radius:5px;"></div>
<div style="position:absolute;left:1862.5px;top:899.8px;width:17px;height:3.2px;background:#e3e3e5;"></div>
<div style="position:absolute;left:1869.4px;top:892.8px;width:3.2px;height:17px;background:#e3e3e5;"></div>
<div style="position:absolute;left:1633px;top:991.5px;width:25px;height:25px;background:#c1c0c6;border-radius:5px;"></div>
<div style="position:absolute;left:1637px;top:1002.3px;width:17px;height:3.2px;background:#e3e3e5;"></div>
<div style="position:absolute;left:1643.9px;top:995.3px;width:3.2px;height:17px;background:#e3e3e5;"></div>
<div style="position:absolute;left:1988.5px;top:1403px;width:159.5px;height:52px;border:2px solid #d5d5d8;border-radius:8px;background:#dfdfdf;"></div>
<svg style="position:absolute;left:2003px;top:1418px;" width="30" height="30" viewBox="0 0 30 30"><circle cx="10.5" cy="10" r="9" fill="none" stroke="#9c9ca6" stroke-width="2"/><line x1="17" y1="16.5" x2="23.5" y2="23" stroke="#9c9ca6" stroke-width="2"/><line x1="5" y1="10" x2="16" y2="10" stroke="#9c9ca6" stroke-width="2"/></svg>
<svg style="position:absolute;left:2058px;top:1418px;" width="26" height="24" viewBox="0 0 26 24"><path d="M3,11 A10,10 0 0 1 21,6" fill="none" stroke="#9c9ca6" stroke-width="2"/><path d="M21,1 L21,7.5 L15,7.5" fill="none" stroke="#9c9ca6" stroke-width="2"/><path d="M21,12 A10,10 0 0 1 3,17" fill="none" stroke="#9c9ca6" stroke-width="2"/><path d="M3,23 L3,16.5 L9,16.5" fill="none" stroke="#9c9ca6" stroke-width="2"/></svg>
<svg style="position:absolute;left:2111px;top:1418px;" width="30" height="30" viewBox="0 0 30 30"><circle cx="10.5" cy="10" r="9" fill="none" stroke="#9c9ca6" stroke-width="2"/><line x1="17" y1="16.5" x2="23.5" y2="23" stroke="#9c9ca6" stroke-width="2"/><line x1="5" y1="10" x2="16" y2="10" stroke="#9c9ca6" stroke-width="2"/><line x1="10.5" y1="4.5" x2="10.5" y2="15.5" stroke="#9c9ca6" stroke-width="2"/></svg>
<div style="position:absolute;left:2173px;top:43.8px;width:800px;height:79px;background:#dfdfdf;border-radius:12px;box-shadow:0 0 12px 4px rgba(0,0,0,0.035);"></div>
<svg style="position:absolute;left:2196.3px;top:71.3px;" width="38.4" height="38.4" viewBox="0 0 38.4 38.4"><circle cx="11.2" cy="11.2" r="9.2" fill="none" stroke="#a9a9b1" stroke-width="2"/><line x1="17.823999999999998" y1="17.823999999999998" x2="24.54" y2="24.54" stroke="#a9a9b1" stroke-width="2" stroke-linecap="round"/></svg>
<div style="position:absolute;left:2249.00px;top:71.62px;font:400 22.3px/22.3px 'Liberation Sans', sans-serif;color:#a9a9b1;white-space:nowrap;">Search step</div>
<div style="position:absolute;left:2168px;top:175px;width:805px;height:685px;background:#e0e0e0;border-radius:10px 10px 0 0;box-shadow:0 6px 18px 2px rgba(0,0,0,0.045);"></div>
<div style="position:absolute;left:2168px;top:190px;width:5px;height:670px;background:#eeeeef;"></div>
<div style="position:absolute;left:2172.5px;top:180.2px;width:793.5px;height:679.8px;background:#ffffff;border-radius:8px;overflow:hidden;"></div>
<svg style="position:absolute;left:2197.5px;top:206px;" width="33" height="33" viewBox="0 0 33 33"><defs><linearGradient id="tg6" x1="0" y1="1" x2="1" y2="0"><stop offset="0" stop-color="#1f5a9e"/><stop offset="1" stop-color="#3a8fd6"/></linearGradient></defs><g transform="scale(0.6)" fill="url(#tg6)" opacity="1"><path d="M0,26.8 L0,16.4 L34.5,5.2 L35,0 L52.2,3.9 L38.9,18.2 L37.6,14.7 Z"/><path d="M0.2,36.3 L11.4,33 L11.4,51.8 L0.2,51.8 Z"/><path d="M23.1,28.5 L34.7,25 L34.7,51.8 L23.1,51.8 Z"/></g></svg>
<div style="position:absolute;left:2243.50px;top:206.77px;font:400 23.9px/23.9px 'Liberation Sans', sans-serif;color:#1c1e3d;white-space:nowrap;-webkit-text-stroke:0.57px currentColor;">Get a parameter format</div>
<div style="position:absolute;left:2507.00px;top:207.28px;font:400 23.3px/23.3px 'Liberation Sans', sans-serif;color:#9a9ba6;white-space:nowrap;">(terminus-2)</div>
<svg style="position:absolute;left:2645px;top:206px;" width="26" height="26" viewBox="0 0 26 26"><circle cx="12.5" cy="12.5" r="11" fill="none" stroke="#272943" stroke-width="1.8"/><text x="12.5" y="18.3" text-anchor="middle" font-family="Liberation Sans" font-weight="400" font-size="16.5" fill="#272943">?</text></svg>
<svg style="position:absolute;left:2918px;top:210px;" width="28" height="24" viewBox="0 0 28 24"><path d="M3,11.5 L13,2.8 L23,11.5 M3,19.5 L13,10.8 L23,19.5" fill="none" stroke="#1c1e3d" stroke-width="2.6" stroke-linecap="round"/></svg>
<div style="position:absolute;left:2186.4px;top:280.3px;width:766.6px;height:60.7px;border:2px solid #dcdce2;border-radius:7px;"></div>
<div style="position:absolute;left:2214.50px;top:301.53px;font:400 23.0px/23.0px 'Liberation Sans', sans-serif;color:#22243a;white-space:nowrap;">Get a parameter format</div>
<svg style="position:absolute;left:2912px;top:302px;" width="28" height="20" viewBox="0 0 28 20"><path d="M3,4 L13.5,14.5 L24,4" fill="none" stroke="#2a2c44" stroke-width="2.6"/></svg>
<div style="position:absolute;left:2172.5px;top:359.5px;width:793.5px;height:2px;background:#efeff1;"></div>
<div style="position:absolute;left:2172.5px;top:361.5px;width:225.2px;height:498.5px;background:#f5f5f5;border-radius:0 0 0 8px;"></div>
<div style="position:absolute;left:2198.70px;top:387.28px;font:400 23.3px/23.3px 'Liberation Sans', sans-serif;color:#4d4f63;white-space:nowrap;">Describe</div>
<div style="position:absolute;left:2198.70px;top:440.93px;font:400 23.3px/23.3px 'Liberation Sans', sans-serif;color:#4d4f63;white-space:nowrap;">Authenticate</div>
<div style="position:absolute;left:2198.70px;top:493.81px;font:400 24.2px/24.2px 'Liberation Sans', sans-serif;color:#2f6fd6;white-space:nowrap;-webkit-text-stroke:0.58px currentColor;">Input data</div>
<div style="position:absolute;left:2198.70px;top:548.23px;font:400 23.3px/23.3px 'Liberation Sans', sans-serif;color:#4d4f63;white-space:nowrap;">Output data</div>
<div style="position:absolute;left:2198.70px;top:601.88px;font:400 23.3px/23.3px 'Liberation Sans', sans-serif;color:#4d4f63;white-space:nowrap;">Handle errors</div>
<svg style="position:absolute;left:2358px;top:497px;" width="18" height="22" viewBox="0 0 18 22"><path d="M4.5,3.5 L11.5,11 L4.5,18.5" fill="none" stroke="#2f6fd6" stroke-width="3.4"/></svg>
<div style="position:absolute;left:2211.40px;top:807.19px;font:400 23.4px/23.4px 'Liberation Sans', sans-serif;color:#2a2c3e;white-space:nowrap;">v 1.0</div>
<svg style="position:absolute;left:2283px;top:810px;" width="24" height="18" viewBox="0 0 24 18"><path d="M3,4 L11,13 L19,4" fill="none" stroke="#2a2c44" stroke-width="2.4"/></svg>
<div style="position:absolute;left:2425.3px;top:400px;width:19px;height:19px;border:2px solid #d4d4da;border-radius:50%;"></div>
<div style="position:absolute;left:2462.00px;top:399.11px;font:400 23.5px/23.5px 'Liberation Sans', sans-serif;color:#1c1e3d;white-space:nowrap;-webkit-text-stroke:0.56px currentColor;">Project ID<span style="color:#d23a3a">*</span></div>
<div style="position:absolute;left:2838px;top:398.5px;width:23.4px;height:23.4px;border-radius:50%;background:#d8d8dd;"></div>
<div style="position:absolute;left:2849.70px;top:403.61px;font:700 17px/17px 'Liberation Sans', sans-serif;color:#ffffff;white-space:nowrap;transform:translateX(-50%);">?</div>
<div style="position:absolute;left:2875px;top:387.4px;width:70.3px;height:47px;background:#f3f3f4;"></div>
<div style="position:absolute;left:2887.00px;top:397.99px;font:400 26px/26px 'Liberation Sans', sans-serif;color:#55576a;white-space:nowrap;font-family:'Liberation Serif',serif;">A</div>
<svg style="position:absolute;left:2918px;top:406px;" width="14" height="10" viewBox="0 0 14 10"><path d="M1,2 L13,2 L7,8 Z" fill="#3a3c50"/></svg>
<div style="position:absolute;left:2425.3px;top:448px;width:516px;height:74.3px;border:2px solid #e8e8eb;border-radius:8px;"></div>
<div style="position:absolute;left:2455.70px;top:475.30px;font:400 22.8px/22.8px 'Liberation Sans', sans-serif;color:#2a2c3e;white-space:nowrap;">Test Project 2</div>
<svg style="position:absolute;left:2905px;top:480px;" width="22" height="16" viewBox="0 0 22 16"><path d="M3,4 L10.5,11.5 L18,4" fill="none" stroke="#2a2c44" stroke-width="2.6"/></svg>
<div style="position:absolute;left:2425.3px;top:579px;width:23.4px;height:23.4px;border-radius:50%;background:#f2b145;"></div>
<div style="position:absolute;left:2462.00px;top:578.07px;font:400 23.9px/23.9px 'Liberation Sans', sans-serif;color:#1c1e3d;white-space:nowrap;-webkit-text-stroke:0.57px currentColor;">Parameter format ID<span style="color:#d23a3a">*</span></div>
<div style="position:absolute;left:2841.5px;top:578.5px;width:23.4px;height:23.4px;border-radius:50%;background:#d8d8dd;"></div>
<div style="position:absolute;left:2853.20px;top:583.61px;font:700 17px/17px 'Liberation Sans', sans-serif;color:#ffffff;white-space:nowrap;transform:translateX(-50%);">?</div>
<div style="position:absolute;left:2877px;top:568.7px;width:68.3px;height:45.7px;background:#f3f3f4;"></div>
<svg style="position:absolute;left:2888px;top:578px;" width="20" height="26" viewBox="0 0 20 26"><circle cx="4" cy="4" r="2.6" fill="none" stroke="#3a3c50" stroke-width="1.6"/><circle cx="13" cy="6" r="2.6" fill="none" stroke="#3a3c50" stroke-width="1.6"/><circle cx="4" cy="20" r="2.6" fill="none" stroke="#3a3c50" stroke-width="1.6"/><path d="M4,6.6 L4,17.4 M13,8.6 Q13,14 4,15" fill="none" stroke="#3a3c50" stroke-width="1.6"/></svg>
<svg style="position:absolute;left:2918px;top:587px;" width="14" height="10" viewBox="0 0 14 10"><path d="M1,2 L13,2 L7,8 Z" fill="#3a3c50"/></svg>
<div style="position:absolute;left:2422.3px;top:624.6px;width:520px;height:97px;background:#f3f3f4;border:3px solid #e3e3e7;border-radius:8px;"></div>
<svg style="position:absolute;left:2452px;top:646.5px;" width="32" height="29" viewBox="0 0 32 29"><g transform="scale(0.6)"><path d="M7.99,24.85 A19.3,19.3 0 1 1 9.37,29.35" fill="none" stroke="#1a1a1a" stroke-width="2.6" stroke-linecap="round"/><path d="M1.69,15.25 L7.99,24.85 L15.89,16.35" fill="none" stroke="#1a1a1a" stroke-width="2.6" stroke-linecap="round" stroke-linejoin="miter"/></g></svg>
<div style="position:absolute;left:2492.00px;top:645.11px;font:400 23.5px/23.5px 'Liberation Sans', sans-serif;color:#1c1e3d;white-space:nowrap;-webkit-text-stroke:0.56px currentColor;">id</div>
<div style="position:absolute;left:2452.00px;top:678.32px;font:400 23.25px/23.25px 'Liberation Sans', sans-serif;color:#a3a4ae;white-space:nowrap;">$.steps.loop-1.value.id</div>
<div style="position:absolute;left:2425.3px;top:764.3px;width:336.7px;height:66.4px;background:#f3f3f4;border-radius:6px;"></div>
<div style="position:absolute;left:2453.00px;top:785.85px;font:400 23.8px/23.8px 'Liberation Sans', sans-serif;color:#484a5c;white-space:nowrap;-webkit-text-stroke:0.57px currentColor;">Show advanced properties</div>
</body></html>
